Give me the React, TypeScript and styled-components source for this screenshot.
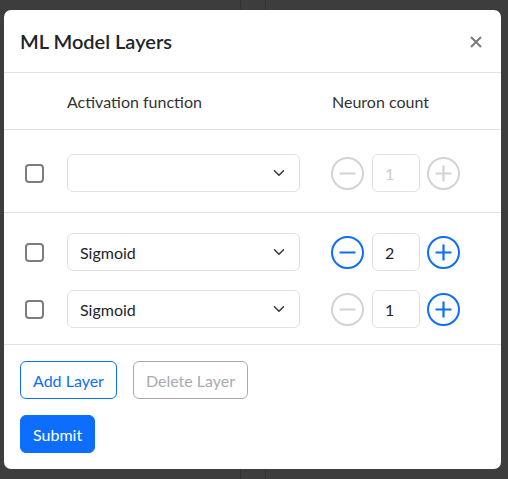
import React from "react";
import styled, { createGlobalStyle } from "styled-components";

const GlobalStyle = createGlobalStyle`
  html, body {
    margin: 0;
    padding: 0;
    background-color: #3d3d3d;
    background-image:
      linear-gradient(90deg, transparent 240px, #333 240px, #333 241px, transparent 241px),
      linear-gradient(90deg, transparent 265px, #333 265px, #333 266px, transparent 266px);
    font-family: "Lato", "Noto Sans", sans-serif;
    color: #212529;
  }
`;

const Backdrop = styled.div`
  padding: 10px 7px 10px 4px;
`;

const Modal = styled.div`
  width: 497px;
  background: #fff;
  border-radius: 7px;
  overflow: hidden;
`;

const Header = styled.div`
  display: flex;
  align-items: center;
  justify-content: space-between;
  height: 62px;
  padding: 0 17px 0 16px;
  border-bottom: 1px solid #dee2e6;
`;

const Title = styled.h5`
  margin: 0;
  font-size: 20px;
  font-weight: 600;
  color: #212529;
`;

const CloseButton = styled.button`
  border: none;
  background: none;
  padding: 0;
  width: 16px;
  height: 16px;
  display: flex;
  align-items: center;
  justify-content: center;
  margin-top: 2px;
`;

const Grid = styled.div`
  display: grid;
  grid-template-columns: 63px 264px 1fr;
  align-items: center;
`;

const HeadRow = styled(Grid)`
  height: 56px;
  border-bottom: 1px solid #dee2e6;
  font-size: 16px;
  color: #333;

  & > span:last-child {
    padding-left: 1px;
  }
`;

const Section = styled.div<{ $top: number; $bottom: number }>`
  display: flex;
  flex-direction: column;
  gap: 19px;
  padding: ${(p) => p.$top}px 0 ${(p) => p.$bottom}px;
  border-bottom: 1px solid #dee2e6;
`;

const Check = styled.span`
  justify-self: start;
  margin-left: 21px;
  width: 19px;
  height: 19px;
  box-sizing: border-box;
  border: 2px solid #7d7d7d;
  border-radius: 4px;
`;

const Select = styled.div`
  width: 233px;
  height: 38px;
  box-sizing: border-box;
  border: 1px solid #dee2e6;
  border-radius: 6px;
  display: flex;
  align-items: center;
  justify-content: space-between;
  padding: 0 14px 0 12px;
  font-size: 16px;
  color: #212529;
`;

const Stepper = styled.div`
  display: flex;
  align-items: center;
`;

const CircleBtn = styled.span<{ $active: boolean }>`
  width: 33px;
  height: 33px;
  display: flex;
  align-items: center;
  justify-content: center;
  color: ${(p) => (p.$active ? "#0d6efd" : "#d3d3d3")};
`;

const Count = styled.div<{ $muted: boolean }>`
  width: 48px;
  height: 38px;
  margin: 0 7px 0 8px;
  box-sizing: border-box;
  border: 1px solid #dee2e6;
  border-radius: 6px;
  display: flex;
  align-items: center;
  padding-left: 12px;
  font-size: 16px;
  color: ${(p) => (p.$muted ? "#ccc" : "#212529")};
`;

const Footer = styled.div`
  display: flex;
  flex-direction: column;
  align-items: flex-start;
  gap: 16px;
  padding: 16px;
`;

const ButtonRow = styled.div`
  display: flex;
  gap: 16px;
`;

const Button = styled.button<{ $variant: "outline" | "disabled" | "solid" }>`
  height: 38px;
  padding: 0 12px;
  border-radius: 6px;
  font-family: inherit;
  font-size: 16px;
  border: 1px solid
    ${(p) => (p.$variant === "disabled" ? "#a7abaf" : "#0d6efd")};
  background: ${(p) => (p.$variant === "solid" ? "#0d6efd" : "#fff")};
  color: ${(p) =>
    p.$variant === "solid"
      ? "#fff"
      : p.$variant === "disabled"
      ? "#a7abaf"
      : "#0d6efd"};
`;

const Chevron = () => (
  <svg width="12" height="12" viewBox="0 0 16 16" fill="none">
    <path
      d="M2 5l6 6 6-6"
      stroke="#343a40"
      strokeWidth="2"
      strokeLinecap="round"
      strokeLinejoin="round"
    />
  </svg>
);

const MinusIcon = () => (
  <svg width="33" height="33" viewBox="0 0 33 33" fill="none">
    <circle cx="16.5" cy="16.5" r="15.5" stroke="currentColor" strokeWidth="2" />
    <path d="M8.5 16.5h16" stroke="currentColor" strokeWidth="2.2" />
  </svg>
);

const PlusIcon = () => (
  <svg width="33" height="33" viewBox="0 0 33 33" fill="none">
    <circle cx="16.5" cy="16.5" r="15.5" stroke="currentColor" strokeWidth="2" />
    <path d="M8.5 16.5h16M16.5 8.5v16" stroke="currentColor" strokeWidth="2.2" />
  </svg>
);

type Layer = {
  fn: string;
  count: number;
  canDec: boolean;
  canInc: boolean;
  muted: boolean;
};

const LayerRow: React.FC<{ layer: Layer }> = ({ layer }) => (
  <Grid>
    <Check />
    <Select>
      <span>{layer.fn}</span>
      <Chevron />
    </Select>
    <Stepper>
      <CircleBtn $active={layer.canDec}>
        <MinusIcon />
      </CircleBtn>
      <Count $muted={layer.muted}>{layer.count}</Count>
      <CircleBtn $active={layer.canInc}>
        <PlusIcon />
      </CircleBtn>
    </Stepper>
  </Grid>
);

export default function App() {
  const first: Layer = { fn: "", count: 1, canDec: false, canInc: false, muted: true };
  const layers: Layer[] = [
    { fn: "Sigmoid", count: 2, canDec: true, canInc: true, muted: false },
    { fn: "Sigmoid", count: 1, canDec: false, canInc: true, muted: false },
  ];

  return (
    <>
      <GlobalStyle />
      <Backdrop>
        <Modal>
          <Header>
            <Title>ML Model Layers</Title>
            <CloseButton aria-label="Close">
              <svg width="12" height="12" viewBox="0 0 12 12">
                <path
                  d="M1 1l10 10M11 1L1 11"
                  stroke="#7a7a7a"
                  strokeWidth="2"
                />
              </svg>
            </CloseButton>
          </Header>
          <HeadRow>
            <span />
            <span>Activation function</span>
            <span>Neuron count</span>
          </HeadRow>
          <Section $top={24} $bottom={20}>
            <LayerRow layer={first} />
          </Section>
          <Section $top={20} $bottom={16}>
            {layers.map((l, i) => (
              <LayerRow key={i} layer={l} />
            ))}
          </Section>
          <Footer>
            <ButtonRow>
              <Button $variant="outline">Add Layer</Button>
              <Button $variant="disabled">Delete Layer</Button>
            </ButtonRow>
            <Button $variant="solid">Submit</Button>
          </Footer>
        </Modal>
      </Backdrop>
    </>
  );
}
